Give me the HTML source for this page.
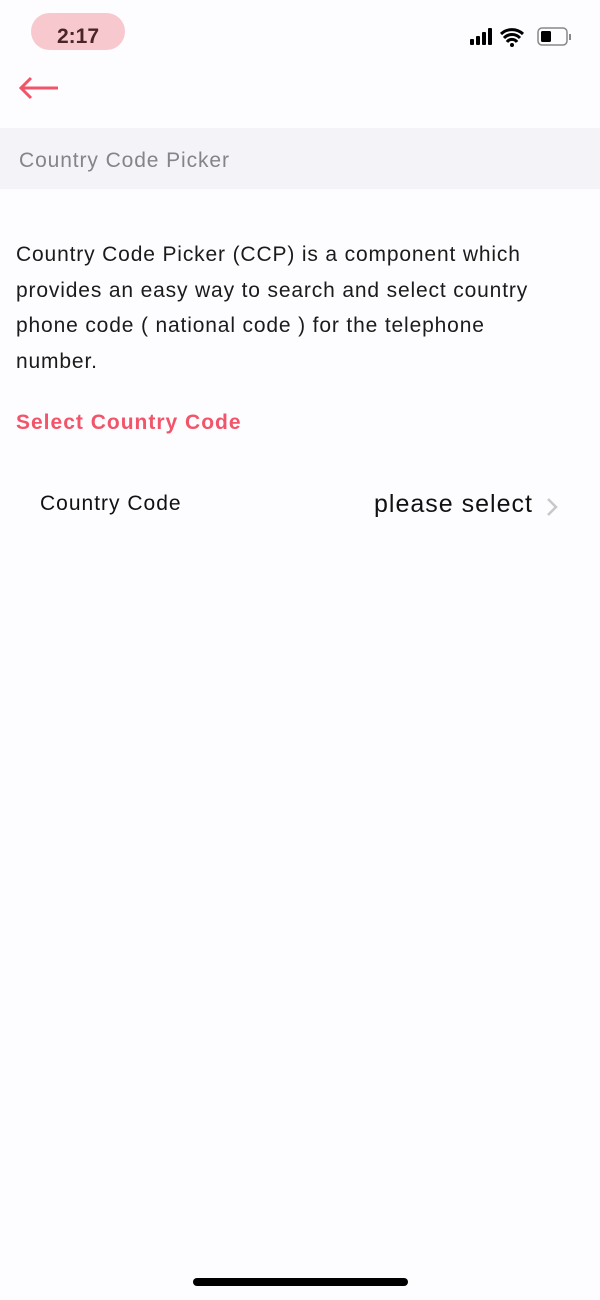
<!DOCTYPE html>
<html><head><meta charset="utf-8"><style>
body{margin:0;width:600px;height:1300px;background:#fdfcfe;font-family:"Liberation Sans",sans-serif;position:relative;overflow:hidden}
.a{position:absolute;white-space:nowrap}
</style></head><body>
<div class="a" style="left:31px;top:13px;width:94px;height:37px;border-radius:19px;background:#f7c9cf"></div>
<div class="a" style="left:31px;top:24px;width:94px;text-align:center;font-size:21px;color:#4a2428;font-weight:bold;line-height:26px">2:17</div>
<svg class="a" style="left:468px;top:26px" width="110" height="22">
<rect x="2" y="13" width="4" height="6" rx="1"/><rect x="8" y="10" width="4" height="9" rx="1"/><rect x="14" y="6" width="4" height="13" rx="1"/><rect x="20" y="2" width="4" height="17" rx="1"/>
<path d="M33 8a16 16 0 0 1 22 0M36 12a11 11 0 0 1 16 0M39 16a6 6 0 0 1 10 0" stroke="#000" stroke-width="3" fill="none"/><circle cx="44" cy="19" r="2"/>
<rect x="70" y="2" width="29" height="17" rx="4" fill="none" stroke="#888" stroke-width="1.5"/><rect x="73" y="5" width="10" height="11" rx="1.5"/><rect x="101" y="8" width="2" height="6" fill="#888"/>
</svg>
<svg class="a" style="left:18px;top:74px" width="44" height="30"><path d="M3 14H40M13 4L3 14L13 24" stroke="#f2556a" stroke-width="3" fill="none"/></svg>
<div class="a" style="left:0;top:128px;width:600px;height:61px;background:#f4f3f7"></div>
<div class="a" style="left:19px;top:149px;font-size:21px;color:#858488;letter-spacing:0.9px">Country Code Picker</div>
<div class="a" style="left:16px;top:237px;font-size:21px;line-height:35.5px;color:#1b1b1b;letter-spacing:0.85px">Country Code Picker (CCP) is a component which<br>provides an easy way to search and select country<br>phone code ( national code ) for the telephone<br>number.</div>
<div class="a" style="left:16px;top:411px;font-size:21px;font-weight:bold;color:#f2556a;letter-spacing:1px">Select Country Code</div>
<div class="a" style="left:40px;top:492px;font-size:21px;color:#111;letter-spacing:1px">Country Code</div>
<div class="a" style="left:374px;top:490px;font-size:25px;color:#111;letter-spacing:1px">please select</div>
<svg class="a" style="left:545px;top:496px" width="14" height="22"><path d="M3 3L11 11L3 19" stroke="#c8c8c8" stroke-width="2.5" fill="none"/></svg>
<div class="a" style="left:193px;top:1278px;width:215px;height:8px;border-radius:4px;background:#000"></div>
</body></html>
